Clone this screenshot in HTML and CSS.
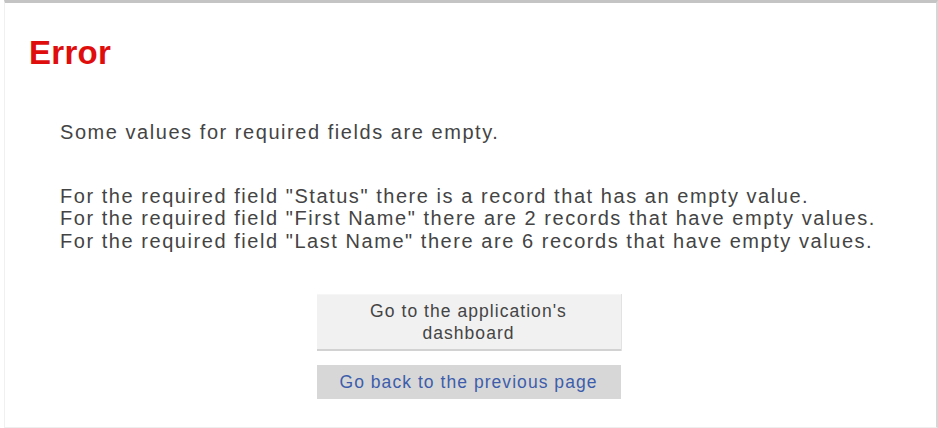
FILE: index.html
```html
<!DOCTYPE html>
<html lang="en">
<head>
    <meta charset="UTF-8">
    <title>Error</title>
    <link rel="stylesheet" href="styles.css">
</head>
<body>
    <div class="frame">
        <h1 class="error-title">Error</h1>
        <div class="message">
            <p class="summary">Some values for required fields are empty.</p>
            <p class="details">
                For the required field "Status" there is a record that has an empty value.<br>
                For the required field "First Name" there are 2 records that have empty values.<br>
                For the required field "Last Name" there are 6 records that have empty values.
            </p>
        </div>
        <div class="actions">
            <button class="btn btn-dashboard">Go to the application's<br>dashboard</button>
            <button class="btn btn-back">Go back to the previous page</button>
        </div>
    </div>
</body>
</html>
```

FILE: styles.css
```css
html, body {
    margin: 0;
    padding: 0;
    background-color: #fff;
}
body {
    font-family: "Liberation Sans", Arial, sans-serif;
    color: #444;
}
.frame {
    box-sizing: border-box;
    height: 428px;
    border-top: 3px solid #c4c4c4;
    border-right: 2px solid #d6d6d6;
    border-bottom: 1px solid #eeeeee;
    border-left: 1px solid #f0f0f0;
    margin-left: 4px;
    padding: 0 0 0 24px;
}
.error-title {
    margin: 0;
    padding-top: 32px;
    font-size: 33px;
    font-weight: bold;
    color: #e00d0d;
    line-height: 36px;
    letter-spacing: 0.3px;
}
.message {
    padding-left: 31px;
    font-size: 20px;
    letter-spacing: 1.55px;
    line-height: 22.5px;
}
.summary {
    margin: 50px 0 0;
}
.details {
    margin: 41px 0 0;
}
.actions {
    display: flex;
    flex-direction: column;
    align-items: center;
    gap: 14px;
    margin-top: 42px;
    margin-left: -28px;
}
.btn {
    width: 304px;
    border: none;
    padding: 0;
    font-family: "Liberation Sans", Arial, sans-serif;
    font-size: 17.5px;
    letter-spacing: 1.05px;
    cursor: pointer;
}
.btn-dashboard {
    height: 57px;
    background-color: #f1f1f1;
    color: #444;
    line-height: 22px;
    border-top: 1px solid #f6f6f6;
    border-bottom: 2px solid #d2d2d2;
    box-shadow: 1px 0 0 #e2e2e2;
}
.btn-back {
    height: 34px;
    background-color: #d7d7d7;
    color: #3d5dab;
}
```
